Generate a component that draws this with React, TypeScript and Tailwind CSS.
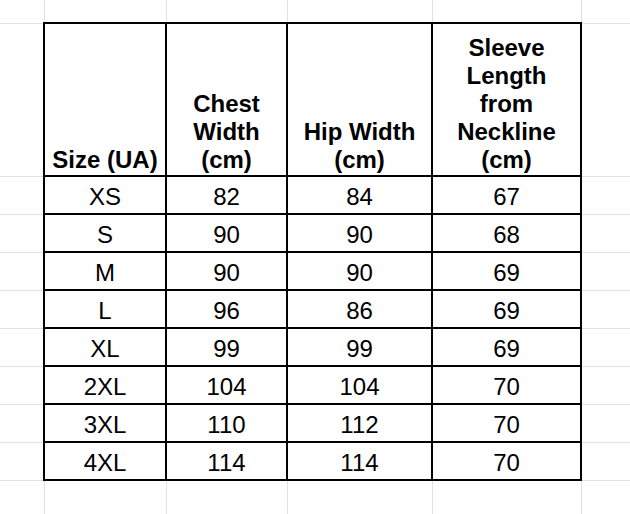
import React from 'react';

const rows: [string, number, number, number][] = [
  ['XS', 82, 84, 67],
  ['S', 90, 90, 68],
  ['M', 90, 90, 69],
  ['L', 96, 86, 69],
  ['XL', 99, 99, 69],
  ['2XL', 104, 104, 70],
  ['3XL', 110, 112, 70],
  ['4XL', 114, 114, 70],
];

const grid = 'border border-[#e2e2e2]';
const cell = 'border-2 border-black text-center';

export default function App() {
  return (
    <div className="w-[630px] h-[514px] overflow-hidden bg-white text-black font-['Liberation_Sans',Arial,sans-serif]">
      <table className="table-fixed border-collapse w-[630px]">
        <colgroup>
          <col className="w-[44px]" />
          <col className="w-[122px]" />
          <col className="w-[121px]" />
          <col className="w-[145px]" />
          <col className="w-[149px]" />
          <col className="w-[49px]" />
        </colgroup>
        <tbody>
          {/* spreadsheet row above the table */}
          <tr className="h-[23px]">
            <td className={`${grid} border-t-0 border-l-0`} />
            <td className={`${grid} border-t-0`} />
            <td className={`${grid} border-t-0`} />
            <td className={`${grid} border-t-0`} />
            <td className={`${grid} border-t-0`} />
            <td className={`${grid} border-t-0 border-r-0`} />
          </tr>

          {/* header */}
          <tr className="h-[153px] text-[24px] leading-[28px] font-bold">
            <td className={`${grid} border-l-0`} />
            <td className={`${cell} align-bottom pb-[1px]`}>Size (UA)</td>
            <td className={`${cell} align-bottom pb-[1px]`}>
              Chest
              <br />
              Width
              <br />
              (cm)
            </td>
            <td className={`${cell} align-bottom pb-[1px]`}>
              Hip Width
              <br />
              (cm)
            </td>
            <td className={`${cell} align-bottom pb-[1px]`}>
              Sleeve
              <br />
              Length
              <br />
              from
              <br />
              Neckline
              <br />
              (cm)
            </td>
            <td className={`${grid} border-r-0`} />
          </tr>

          {rows.map(([size, chest, hip, sleeve]) => (
            <tr key={size} className="h-[38px] text-[24px] leading-[28px]">
              <td className={`${grid} border-l-0`} />
              <td className={`${cell} align-middle pt-[4px] pb-0`}>{size}</td>
              <td className={`${cell} align-middle pt-[4px] pb-0`}>{chest}</td>
              <td className={`${cell} align-middle pt-[4px] pb-0`}>{hip}</td>
              <td className={`${cell} align-middle pt-[4px] pb-0`}>{sleeve}</td>
              <td className={`${grid} border-r-0`} />
            </tr>
          ))}

          {/* spreadsheet row below the table */}
          <tr className="h-[34px]">
            <td className={`${grid} border-l-0 border-b-0`} />
            <td className={`${grid} border-b-0`} />
            <td className={`${grid} border-b-0`} />
            <td className={`${grid} border-b-0`} />
            <td className={`${grid} border-b-0`} />
            <td className={`${grid} border-b-0 border-r-0`} />
          </tr>
        </tbody>
      </table>
    </div>
  );
}
